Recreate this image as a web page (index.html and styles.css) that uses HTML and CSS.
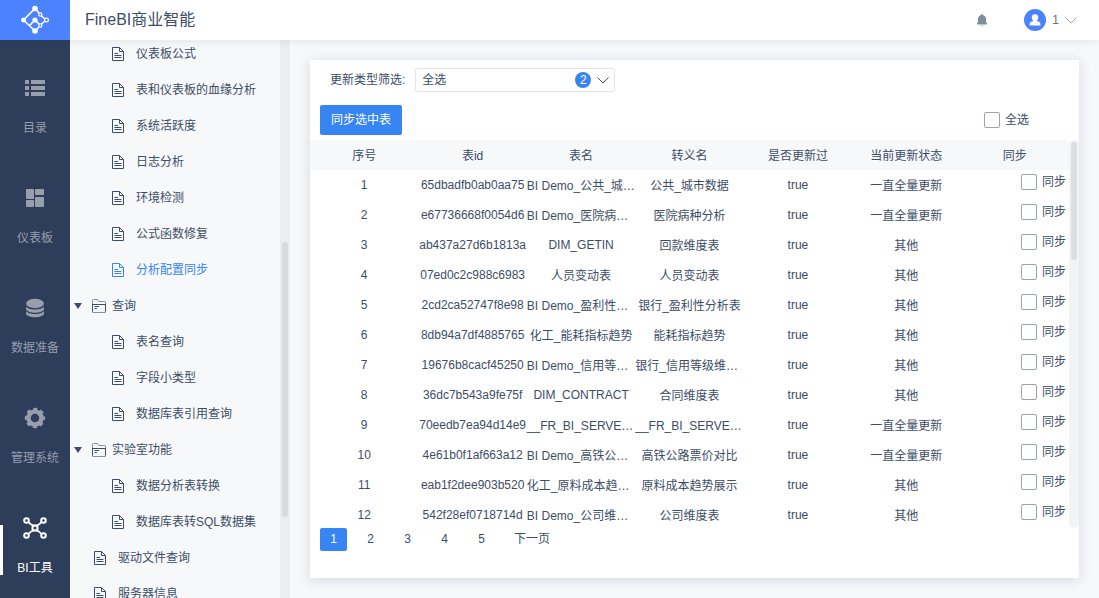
FILE: index.html
```html
<!DOCTYPE html>
<html lang="zh-CN">
<head>
<meta charset="utf-8">
<title>FineBI商业智能</title>
<link rel="stylesheet" href="styles.css">
</head>
<body>
<svg class="defs" aria-hidden="true">
  <symbol id="doc" viewBox="0 0 14 16"><path d="M1.500 1.500h7l4 4v9h-11zM8.500 1.500v4h4M3.500 7.500h3.500M3.500 9.500h7M3.500 11.500h7" fill="none" stroke="currentColor"/></symbol>
  <symbol id="folder" viewBox="0 0 16 16"><g fill="none" stroke="currentColor"><path d="M1.500 6.500V2.500Q1.500 1.500 2.500 1.500H6.500L8 3.500H13.500Q14.500 3.500 14.500 4.500V6.500M2.500 14.500H13.500" opacity=".6"/><path d="M1.500 6V13.500Q1.500 14.500 2.500 14.500M14.500 6V13.500Q14.500 14.500 13.500 14.500M1.500 6.500H14.500M3.500 8.500H8M3.500 10.500H6"/></g></symbol>
  <symbol id="chevron" viewBox="0 0 14 8"><path d="M1.500 1.500L7 7l5.500-5.500" fill="none" stroke="currentColor"/></symbol>
</svg>
<div class="app">
  <header class="header">
    <a class="logo" href="#" aria-label="FineBI">
      <svg width="30" height="30" viewBox="0 0 30 30" fill="none" stroke="#fff" stroke-width="1.600">
        <path d="M3.500 15L15 3.500L19 8M3.500 15L15 26L19 22M21.500 11L25 14M25 16L21.500 19M15 15L9.500 20.500M15 15L19 19"/>
        <g fill="#fff" stroke="none"><circle cx="3.500" cy="15" r="2.500"/><circle cx="15" cy="3.500" r="2.800"/><circle cx="15" cy="15" r="2.600"/><circle cx="15" cy="26" r="2.800"/></g>
        <g fill="#4b82ff" stroke-width="1.200"><circle cx="20.300" cy="9.500" r="1.600"/><circle cx="26.500" cy="15" r="1.900"/><circle cx="20.300" cy="20.500" r="1.600"/></g>
      </svg>
    </a>
    <h1 class="title">FineBI商业智能</h1>
    <button class="bell" type="button" aria-label="消息">
      <svg width="12" height="14" viewBox="0 0 12 14" fill="currentColor"><path d="M5.300 2V1h1.400v1C9 2.500 10 4 10 6v3l1 1.300V11.500H1V10.300L2 9V6c0-2 1-3.500 3.300-4zM4.500 12.500h3L6 13.500z"/></svg>
    </button>
    <button class="user" type="button">
      <span class="avatar"><svg width="12" height="12" viewBox="0 0 12 12" fill="#fff"><circle cx="6" cy="3.500" r="3.200"/><path d="M4 5h4v2l2.500 1Q11.500 8.500 11.500 11.500H.5Q.5 8.500 1.500 8L4 7z"/></svg></span>
      <span>1</span>
      <svg class="user-arrow" width="14" height="8"><use href="#chevron"/></svg>
    </button>
  </header>
  <div class="body">
    <nav class="nav">
      <a class="nav-item" href="#"><svg width="24" height="24" viewBox="0 0 24 24" fill="currentColor"><path d="M2 4h4v4H2zM8 4h14v4H8zM2 10h4v4H2zM8 10h14v4H8zM2 16h4v4H2zM8 16h14v4H8z"/></svg><span>目录</span></a>
      <a class="nav-item" href="#"><svg width="24" height="24" viewBox="0 0 24 24" fill="currentColor"><rect x="3" y="3" width="8" height="10" rx="1"/><rect x="12" y="3" width="9" height="6" rx="1"/><rect x="3" y="14" width="8" height="7" rx="1"/><rect x="12" y="11" width="9" height="10" rx="1"/></svg><span>仪表板</span></a>
      <a class="nav-item" href="#"><svg width="24" height="24" viewBox="0 0 24 24" fill="currentColor"><ellipse cx="12" cy="7.500" rx="9" ry="4.700"/><path d="M3 10.500c2 4 16 4 18 0v2.500c-1 5-17 5-18 0zM3 15c2 4 16 4 18 0v2.500c-1 5-17 5-18 0z"/></svg><span>数据准备</span></a>
      <a class="nav-item" href="#"><svg width="24" height="24" viewBox="0 0 24 24"><g fill="none" stroke="currentColor"><circle cx="12" cy="12" r="6.500" stroke-width="4.500"/><circle cx="12" cy="12" r="9" stroke-width="2.400" stroke-dasharray="3.800 3.269" stroke-dashoffset="1.900"/></g></svg><span>管理系统</span></a>
      <a class="nav-item active" href="#" aria-current="page"><svg width="24" height="24" viewBox="0 0 24 24" fill="none" stroke="currentColor" stroke-width="2"><path d="M5 5.500Q8 9.500 12 9.500T19 5.500M5 18.500Q8 14.500 12 14.500T19 18.500M5 5.500L19 18.500M19 5.500L5 18.500" stroke-width="1.600"/><g fill="#2d3d5a"><circle cx="3.500" cy="4.500" r="2.300"/><circle cx="20.500" cy="4.500" r="2.300"/><circle cx="3.500" cy="19.500" r="2.300"/><circle cx="20.500" cy="19.500" r="2.300"/><circle cx="12" cy="12" r="2.600"/></g></svg><span>BI工具</span></a>
    </nav>
    <aside class="side">
      <ul class="tree">
        <li class="leaf deep"><a href="#"><svg width="14" height="16"><use href="#doc"/></svg>仪表板公式</a></li>
        <li class="leaf deep"><a href="#"><svg width="14" height="16"><use href="#doc"/></svg>表和仪表板的血缘分析</a></li>
        <li class="leaf deep"><a href="#"><svg width="14" height="16"><use href="#doc"/></svg>系统活跃度</a></li>
        <li class="leaf deep"><a href="#"><svg width="14" height="16"><use href="#doc"/></svg>日志分析</a></li>
        <li class="leaf deep"><a href="#"><svg width="14" height="16"><use href="#doc"/></svg>环境检测</a></li>
        <li class="leaf deep"><a href="#"><svg width="14" height="16"><use href="#doc"/></svg>公式函数修复</a></li>
        <li class="leaf deep selected"><a href="#"><svg width="14" height="16"><use href="#doc"/></svg>分析配置同步</a></li>
        <li class="folder"><a href="#"><i class="caret"></i><svg width="16" height="16"><use href="#folder"/></svg>查询</a></li>
        <li class="leaf deep"><a href="#"><svg width="14" height="16"><use href="#doc"/></svg>表名查询</a></li>
        <li class="leaf deep"><a href="#"><svg width="14" height="16"><use href="#doc"/></svg>字段小类型</a></li>
        <li class="leaf deep"><a href="#"><svg width="14" height="16"><use href="#doc"/></svg>数据库表引用查询</a></li>
        <li class="folder"><a href="#"><i class="caret"></i><svg width="16" height="16"><use href="#folder"/></svg>实验室功能</a></li>
        <li class="leaf deep"><a href="#"><svg width="14" height="16"><use href="#doc"/></svg>数据分析表转换</a></li>
        <li class="leaf deep"><a href="#"><svg width="14" height="16"><use href="#doc"/></svg>数据库表转SQL数据集</a></li>
        <li class="leaf"><a href="#"><svg width="14" height="16"><use href="#doc"/></svg>驱动文件查询</a></li>
        <li class="leaf"><a href="#"><svg width="14" height="16"><use href="#doc"/></svg>服务器信息</a></li>
      </ul>
      <div class="side-scroll"><div class="side-thumb"></div></div>
    </aside>
    <main class="main">
      <section class="card">
        <div class="filter">
          <label for="type">更新类型筛选:</label>
          <div class="combo">
            <select id="type"><option>全选</option></select>
            <span class="badge">2</span>
            <svg class="combo-arrow" width="14" height="8"><use href="#chevron"/></svg>
          </div>
        </div>
        <div class="actions">
          <button class="primary" type="button">同步选中表</button>
          <label class="check"><input type="checkbox">全选</label>
        </div>
        <div class="grid">
          <div class="grid-view">
            <table>
              <thead><tr><th>序号</th><th>表id</th><th>表名</th><th>转义名</th><th>是否更新过</th><th>当前更新状态</th><th>同步</th></tr></thead>
              <tbody>
                <tr><td>1</td><td>65dbadfb0ab0aa75</td><td class="name long">BI Demo_公共_城…</td><td class="name">公共_城市数据</td><td>true</td><td class="name">一直全量更新</td><td class="sync"><label class="check"><input type="checkbox">同步</label></td></tr>
                <tr><td>2</td><td>e67736668f0054d6</td><td class="name long">BI Demo_医院病…</td><td class="name">医院病种分析</td><td>true</td><td class="name">一直全量更新</td><td class="sync"><label class="check"><input type="checkbox">同步</label></td></tr>
                <tr><td>3</td><td>ab437a27d6b1813a</td><td>DIM_GETIN</td><td class="name">回款维度表</td><td>true</td><td class="name">其他</td><td class="sync"><label class="check"><input type="checkbox">同步</label></td></tr>
                <tr><td>4</td><td>07ed0c2c988c6983</td><td class="name">人员变动表</td><td class="name">人员变动表</td><td>true</td><td class="name">其他</td><td class="sync"><label class="check"><input type="checkbox">同步</label></td></tr>
                <tr><td>5</td><td>2cd2ca52747f8e98</td><td class="name long">BI Demo_盈利性…</td><td class="name">银行_盈利性分析表</td><td>true</td><td class="name">其他</td><td class="sync"><label class="check"><input type="checkbox">同步</label></td></tr>
                <tr><td>6</td><td>8db94a7df4885765</td><td class="name">化工_能耗指标趋势</td><td class="name">能耗指标趋势</td><td>true</td><td class="name">其他</td><td class="sync"><label class="check"><input type="checkbox">同步</label></td></tr>
                <tr><td>7</td><td>19676b8cacf45250</td><td class="name long">BI Demo_信用等…</td><td class="name long">银行_信用等级维…</td><td>true</td><td class="name">其他</td><td class="sync"><label class="check"><input type="checkbox">同步</label></td></tr>
                <tr><td>8</td><td>36dc7b543a9fe75f</td><td>DIM_CONTRACT</td><td class="name">合同维度表</td><td>true</td><td class="name">其他</td><td class="sync"><label class="check"><input type="checkbox">同步</label></td></tr>
                <tr><td>9</td><td>70eedb7ea94d14e9</td><td class="name long">__FR_BI_SERVE…</td><td class="name long">__FR_BI_SERVE…</td><td>true</td><td class="name">一直全量更新</td><td class="sync"><label class="check"><input type="checkbox">同步</label></td></tr>
                <tr><td>10</td><td>4e61b0f1af663a12</td><td class="name long">BI Demo_高铁公…</td><td class="name">高铁公路票价对比</td><td>true</td><td class="name">一直全量更新</td><td class="sync"><label class="check"><input type="checkbox">同步</label></td></tr>
                <tr><td>11</td><td>eab1f2dee903b520</td><td class="name long">化工_原料成本趋…</td><td class="name">原料成本趋势展示</td><td>true</td><td class="name">其他</td><td class="sync"><label class="check"><input type="checkbox">同步</label></td></tr>
                <tr><td>12</td><td>542f28ef0718714d</td><td class="name long">BI Demo_公司维…</td><td class="name">公司维度表</td><td>true</td><td class="name">其他</td><td class="sync"><label class="check"><input type="checkbox">同步</label></td></tr>
              </tbody>
            </table>
          </div>
          <div class="grid-scroll"><div class="grid-thumb"></div></div>
        </div>
        <div class="pager">
          <button class="current" type="button">1</button><button type="button">2</button><button type="button">3</button><button type="button">4</button><button type="button">5</button><button class="next" type="button">下一页</button>
        </div>
      </section>
    </main>
  </div>
</div>
</body>
</html>
```
FILE: styles.css
```css
* { box-sizing: border-box; }
body {
  margin: 0;
  font: 12px/16px "Liberation Sans", "Noto Sans CJK SC", sans-serif;
  color: #3d4d66;
  background: #f6f8fa;
}
button, select, input { font: inherit; color: inherit; margin: 0; }
button { border: 0; background: none; padding: 0; cursor: pointer; }
a { color: inherit; text-decoration: none; }
svg { display: block; flex: none; }
.defs { position: absolute; width: 0; height: 0; }

.app { height: 100vh; display: flex; flex-direction: column; overflow: hidden; }
.header {
  position: relative;
  z-index: 1;
  flex: none;
  height: 40px;
  display: flex;
  align-items: center;
  padding-right: 21px;
  background: #fff;
  box-shadow: 0 2px 8px rgba(45, 61, 90, 0.08);
}
.logo { width: 70px; height: 40px; display: grid; place-items: center; background: #4b82ff; }
.title { flex: 1; margin: 0; padding-left: 15px; font-size: 16px; font-weight: 400; line-height: 20px; }
.bell { margin-right: 36px; color: #808da1; }
.user { display: flex; align-items: center; color: #6b6f78; }
.avatar { width: 22px; height: 22px; margin-right: 6px; border-radius: 50%; display: grid; place-items: center; background: #4b82ff; }
.user-arrow { margin-left: 5px; color: #a3a8b0; }

.body { flex: 1; min-height: 0; display: flex; }
.nav { flex: none; width: 70px; padding-top: 15px; overflow: hidden; background: #2d3d5a; }
.nav-item {
  position: relative;
  height: 110px;
  padding-top: 21px;
  display: flex;
  flex-direction: column;
  align-items: center;
  gap: 20px;
  color: #979eac;
}
.nav-item.active { color: #fff; }
.nav-item.active::before { content: ""; position: absolute; left: 0; top: 30px; width: 3px; height: 50px; background: #fff; }

.side { flex: none; width: 220px; display: flex; overflow: hidden; }
.tree { flex: 1; margin: -4px 0 0; padding: 0; list-style: none; }
.tree a { height: 36px; display: flex; align-items: center; white-space: nowrap; }
.leaf a { gap: 11px; padding-left: 23px; }
.deep a { padding-left: 41px; }
.folder a { gap: 5px; padding-left: 4px; }
.selected { color: #3685f2; }
.caret { margin-right: 4px; border: 4px solid transparent; border-top: 6px solid #3d4d66; border-bottom: 0; }
.side-scroll { width: 10px; padding: 202px 2px 0; background: #ebedef; }
.side-thumb { height: 275px; border-radius: 3px; background: #d8dadf; }

.main { flex: 1; min-width: 0; display: flex; padding: 20px; }
.card { flex: 1; min-width: 0; display: flex; flex-direction: column; padding: 8px 0 27px; background: #fff; box-shadow: 0 2px 12px rgba(45, 61, 90, 0.16); }
.filter { display: flex; align-items: center; gap: 10px; padding-left: 20px; }
.combo { position: relative; width: 200px; }
.combo select { width: 100%; height: 24px; padding: 0 6px; appearance: none; border: 1px solid #e4e6ea; border-radius: 2px; background: #fff; }
.badge { position: absolute; right: 24px; top: 4px; width: 16px; height: 16px; border-radius: 50%; background: #3685f2; color: #fff; text-align: center; pointer-events: none; }
.combo-arrow { position: absolute; right: 5px; top: 8px; pointer-events: none; }
.actions { display: flex; align-items: center; justify-content: space-between; margin: 13px 0 5px; padding: 0 50px 0 10px; }
.primary { width: 82px; height: 30px; border-radius: 2px; background: #3685f2; color: #fff; }
.check { display: inline-flex; align-items: center; gap: 5px; }
.check input { width: 16px; height: 16px; appearance: none; border: 1px solid #9aa3b2; border-radius: 2px; background: #fff; }

.grid { flex: 1; min-height: 0; display: flex; }
.grid-view { flex: 1; min-width: 0; overflow: hidden; }
table { width: 100%; table-layout: fixed; border-collapse: collapse; }
th, td { height: 30px; padding: 0; font-weight: 400; text-align: center; white-space: nowrap; }
th { padding-top: 2px; background: #f6f8fa; }
td.name { padding-top: 2px; }
td.long { text-align: left; }
td.sync { padding: 4px 3px 0 0; text-align: right; vertical-align: top; }
.sync .check { display: flex; justify-content: flex-end; }
.grid-scroll { width: 10px; padding: 2px 2px 0; border-radius: 5px; background: #f2f3f4; }
.grid-thumb { height: 118px; border-radius: 3px; background: #dcdee2; }

.pager { display: flex; gap: 10px; padding-left: 10px; }
.pager button { width: 27px; height: 23px; padding-bottom: 2px; border-radius: 2px; }
.pager .current { background: #3685f2; color: #fff; }
.pager .next { width: auto; padding: 0 9px 2px; }
```
